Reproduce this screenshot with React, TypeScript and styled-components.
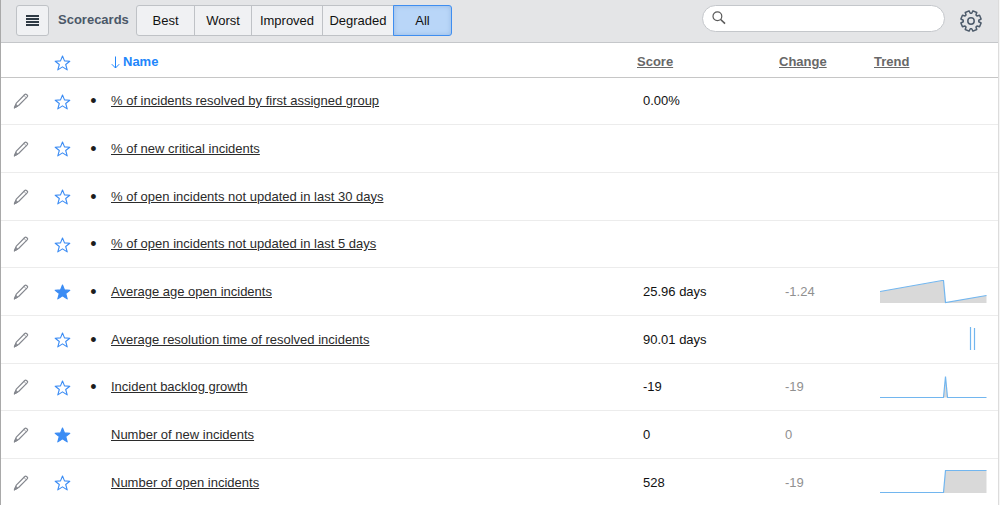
import React, { useState } from 'react';
import styled, { createGlobalStyle, css } from 'styled-components';

const GlobalStyle = createGlobalStyle`
  * { box-sizing: border-box; }
  html { background: #f6f6f6; overflow: hidden; }
  body {
    margin: 0;
    font-family: "Liberation Sans", Arial, Helvetica, sans-serif;
    font-size: 13px;
    line-height: 16px;
    color: #1d1d1d;
  }
  button, input { font: inherit; }
`;

const Page = styled.main`
  min-height: 100vh;
  margin-right: 1px;
  border-left: 1px solid #a9a9a9;
  border-right: 1px solid #dcdcdc;
  background: #fff;
`;

const Toolbar = styled.header`
  display: flex;
  align-items: flex-start;
  height: 43px;
  padding: 5px 15px 0 15px;
  background: #e4e5e7;
  border-bottom: 1px solid #c5c7ca;
`;

const MenuButton = styled.button`
  display: grid;
  place-items: center;
  width: 33px;
  height: 31px;
  padding: 0;
  color: #2f3a44;
  background: #f0f1f3;
  border: 1px solid #bfc2c6;
  border-radius: 3px;
`;

const Title = styled.h1`
  margin: 0 10px 0 9px;
  width: 68px;
  font-size: 13px;
  line-height: 30px;
  font-weight: bold;
  color: #4b5868;
`;

const Segments = styled.div`
  display: flex;
`;

const Segment = styled.button<{ $width: number; $active: boolean }>`
  width: ${(p) => p.$width}px;
  height: 31px;
  margin-left: -1px;
  padding: 0;
  color: #111;
  background: #f0f1f3;
  border: 1px solid #bfc2c6;
  &:first-child { margin-left: 0; border-radius: 3px 0 0 3px; }
  &:last-child { border-radius: 0 3px 3px 0; }
  ${(p) =>
    p.$active &&
    css`
      background: #b9d6f8;
      border-color: #3f8ef0;
      box-shadow: inset 0 0 5px #98b9e2;
    `}
`;

const SearchBox = styled.label`
  display: flex;
  align-items: center;
  width: 243px;
  height: 27px;
  margin-left: auto;
  padding: 0 10px 2px 9px;
  color: #5a5a5a;
  background: #fff;
  border: 1px solid #c4c7cb;
  border-radius: 14px;
`;

const SearchInput = styled.input`
  flex: 1;
  min-width: 0;
  margin-left: 8px;
  padding: 0;
  border: 0;
  outline: 0;
  background: transparent;
`;

const IconButton = styled.button`
  display: grid;
  place-items: center;
  padding: 0;
  border: 0;
  background: transparent;
  color: #85888f;
`;

const GearButton = styled(IconButton)`
  height: 31px;
  margin-left: 14px;
  color: #4d5b6b;
`;

const StarButton = styled(IconButton)`
  margin: 1px auto 0;
  color: #3b8cf4;
`;

const PencilButton = styled(IconButton)`
  margin: 0 auto;
`;

const Table = styled.table`
  width: 100%;
  table-layout: fixed;
  border-collapse: separate;
  border-spacing: 0;
`;

const Col = styled.col<{ $width?: number }>`
  width: ${(p) => (p.$width ? `${p.$width}px` : 'auto')};
`;

const HeadCell = styled.th`
  height: 35px;
  padding: 4px 8px 0;
  text-align: left;
  border-bottom: 1px solid #c6c6c6;
`;

const Cell = styled.td`
  padding: 0 8px;
  border-bottom: 1px solid #ececec;
`;

const IconCell = styled(Cell)`
  padding: 0;
  text-align: center;
`;

const IconHeadCell = styled(HeadCell)`
  padding: 4px 0 0;
`;

const BulletCell = styled(IconCell)`
  font-size: 18px;
`;

const ValueCell = styled(Cell)<{ $muted?: boolean }>`
  padding-left: 14px;
  color: ${(p) => (p.$muted ? '#909090' : '#111')};
`;

const Row = styled.tr`
  height: 48px;
  &:nth-child(3n + 1) { height: 47px; }
`;

const NameLink = styled.a`
  color: #2b2b2b;
  text-decoration: underline;
`;

const SortLink = styled.a<{ $active?: boolean }>`
  display: flex;
  align-items: center;
  gap: 3px;
  color: ${(p) => (p.$active ? '#2186fb' : '#686868')};
  text-decoration: ${(p) => (p.$active ? 'none' : 'underline')};
`;

const Chart = styled.svg`
  display: block;
`;

function Star({ filled }: { filled?: boolean }) {
  return (
    <svg width="17" height="16" viewBox="0 0 17 16" aria-hidden="true">
      <path
        d="M8.5 1 L10.5 5.9 L15.8 6.2 L11.7 9.5 L13.2 14.9 L8.5 11.9 L3.8 14.9 L5.3 9.5 L1.2 6.2 L6.5 5.9 Z"
        fill={filled ? 'currentColor' : 'none'}
        stroke="currentColor"
        strokeWidth="1.1"
        strokeLinejoin="round"
      />
    </svg>
  );
}

function Pencil() {
  return (
    <svg width="16" height="16" viewBox="0 0 16 16" aria-hidden="true" fill="none" stroke="currentColor" strokeLinejoin="round" strokeLinecap="round">
      <path d="M1.4 14.8 L3.3 10.2 L11.8 1.5 C12.8 0.5 15.3 2.2 14.4 3.6 L5.6 12.5 Z" strokeWidth="1.2" />
      <path d="M11 2.6 L13.2 4.6" strokeWidth="0.7" />
      <path d="M1.4 14.8 L2.8 11.4 L4.6 13 Z" fill="currentColor" strokeWidth="0.9" />
    </svg>
  );
}

function Gear() {
  const teeth = 8;
  const points: string[] = [];
  for (let i = 0; i < teeth; i++) {
    const base = (i * 2 * Math.PI) / teeth + Math.PI / teeth;
    [
      [-0.3, 7.8],
      [-0.2, 10.3],
      [0.2, 10.3],
      [0.3, 7.8],
    ].forEach(([offset, r]) => {
      const a = base + offset;
      points.push(`${(12 + r * Math.cos(a)).toFixed(2)},${(12 + r * Math.sin(a)).toFixed(2)}`);
    });
  }
  return (
    <svg width="24" height="24" viewBox="0 0 24 24" aria-hidden="true" fill="none" stroke="currentColor" strokeWidth="1.5" strokeLinejoin="round">
      <polygon points={points.join(' ')} />
      <circle cx="12" cy="12" r="3.2" />
    </svg>
  );
}

type Trend = { line: string; area?: string };

function TrendChart({ trend, label }: { trend: Trend; label: string }) {
  return (
    <Chart width="108" height="25" viewBox="0 0 108 25" role="img" aria-label={label}>
      {trend.area && <path d={trend.area} fill="#d9d9d9" />}
      <path d={trend.line} fill="none" stroke="#72b6ef" strokeWidth="1.2" />
    </Chart>
  );
}

type Scorecard = {
  name: string;
  bullet: boolean;
  starred?: boolean;
  score?: string;
  change?: string;
  trend?: Trend;
};

const scorecards: Scorecard[] = [
  { name: '% of incidents resolved by first assigned group', bullet: true, score: '0.00%' },
  { name: '% of new critical incidents', bullet: true },
  { name: '% of open incidents not updated in last 30 days', bullet: true },
  { name: '% of open incidents not updated in last 5 days', bullet: true },
  {
    name: 'Average age open incidents',
    bullet: true,
    starred: true,
    score: '25.96 days',
    change: '-1.24',
    trend: {
      line: 'M0 12.5 L62 1.5 L63.5 1.5 L65.5 23.5 L106.5 16.5',
      area: 'M0 12.5 L63.5 1.5 L65.5 23.5 L106.5 16.5 V24 H0 Z',
    },
  },
  {
    name: 'Average resolution time of resolved incidents',
    bullet: true,
    score: '90.01 days',
    trend: { line: 'M90.5 0 V23 M94.5 1 V23' },
  },
  {
    name: 'Incident backlog growth',
    bullet: true,
    score: '-19',
    change: '-19',
    trend: { line: 'M0 22.5 H63.5 L65.5 1.5 L67.5 22.5 H106.5', area: 'M63.5 22.5 L65.5 1.5 L67.5 22.5 Z' },
  },
  { name: 'Number of new incidents', bullet: false, starred: true, score: '0', change: '0' },
  {
    name: 'Number of open incidents',
    bullet: false,
    score: '528',
    change: '-19',
    trend: { line: 'M0 22.5 H63.5 L65.5 0.5 H106.5', area: 'M63.5 23 L65.5 0.5 H106.5 V23 Z' },
  },
];

const filters = [
  { label: 'Best', width: 59 },
  { label: 'Worst', width: 58 },
  { label: 'Improved', width: 72 },
  { label: 'Degraded', width: 72 },
  { label: 'All', width: 59 },
];

export default function App() {
  const [active, setActive] = useState('All');
  return (
    <Page>
      <GlobalStyle />
      <Toolbar>
        <MenuButton type="button" aria-label="Menu">
          <svg width="13" height="11" viewBox="0 0 13 11" aria-hidden="true" fill="currentColor">
            <path d="M0 0h13v2H0z M0 3h13v2H0z M0 6h13v2H0z M0 9h13v2H0z" />
          </svg>
        </MenuButton>
        <Title>Scorecards</Title>
        <Segments role="group" aria-label="Filter">
          {filters.map((f) => (
            <Segment
              key={f.label}
              type="button"
              $width={f.width}
              $active={active === f.label}
              aria-pressed={active === f.label}
              onClick={() => setActive(f.label)}
            >
              {f.label}
            </Segment>
          ))}
        </Segments>
        <SearchBox>
          <svg width="14" height="14" viewBox="0 0 14 14" aria-hidden="true" fill="none" stroke="currentColor">
            <circle cx="5.4" cy="5.2" r="4.4" strokeWidth="1.2" />
            <path d="M8.7 8.5 L13 12.6" strokeWidth="1.6" />
          </svg>
          <SearchInput type="text" aria-label="Search" />
        </SearchBox>
        <GearButton type="button" aria-label="Settings">
          <Gear />
        </GearButton>
      </Toolbar>
      <Table>
        <colgroup>
          <Col $width={40} />
          <Col $width={43} />
          <Col $width={19} />
          <Col />
          <Col $width={142} />
          <Col $width={95} />
          <Col $width={132} />
        </colgroup>
        <thead>
          <tr>
            <IconHeadCell />
            <IconHeadCell>
              <StarButton type="button" aria-label="Sort by favorite">
                <Star />
              </StarButton>
            </IconHeadCell>
            <IconHeadCell />
            <HeadCell>
              <SortLink href="#name" $active>
                <svg width="9" height="13" viewBox="0 0 9 13" aria-hidden="true" fill="none" stroke="currentColor">
                  <path d="M4.5 0.5 V12 M0.8 8.2 L4.5 12 L8.2 8.2" strokeWidth="1" />
                </svg>
                Name
              </SortLink>
            </HeadCell>
            <HeadCell><SortLink href="#score">Score</SortLink></HeadCell>
            <HeadCell><SortLink href="#change">Change</SortLink></HeadCell>
            <HeadCell><SortLink href="#trend">Trend</SortLink></HeadCell>
          </tr>
        </thead>
        <tbody>
          {scorecards.map((s) => (
            <Row key={s.name}>
              <IconCell>
                <PencilButton type="button" aria-label={`Edit ${s.name}`}>
                  <Pencil />
                </PencilButton>
              </IconCell>
              <IconCell>
                <StarButton type="button" aria-label={`Favorite ${s.name}`} aria-pressed={!!s.starred}>
                  <Star filled={s.starred} />
                </StarButton>
              </IconCell>
              <BulletCell>{s.bullet ? '•' : null}</BulletCell>
              <Cell><NameLink href="#scorecard">{s.name}</NameLink></Cell>
              <ValueCell>{s.score}</ValueCell>
              <ValueCell $muted>{s.change}</ValueCell>
              <ValueCell>
                {s.trend && <TrendChart trend={s.trend} label={`${s.name} trend`} />}
              </ValueCell>
            </Row>
          ))}
        </tbody>
      </Table>
    </Page>
  );
}
